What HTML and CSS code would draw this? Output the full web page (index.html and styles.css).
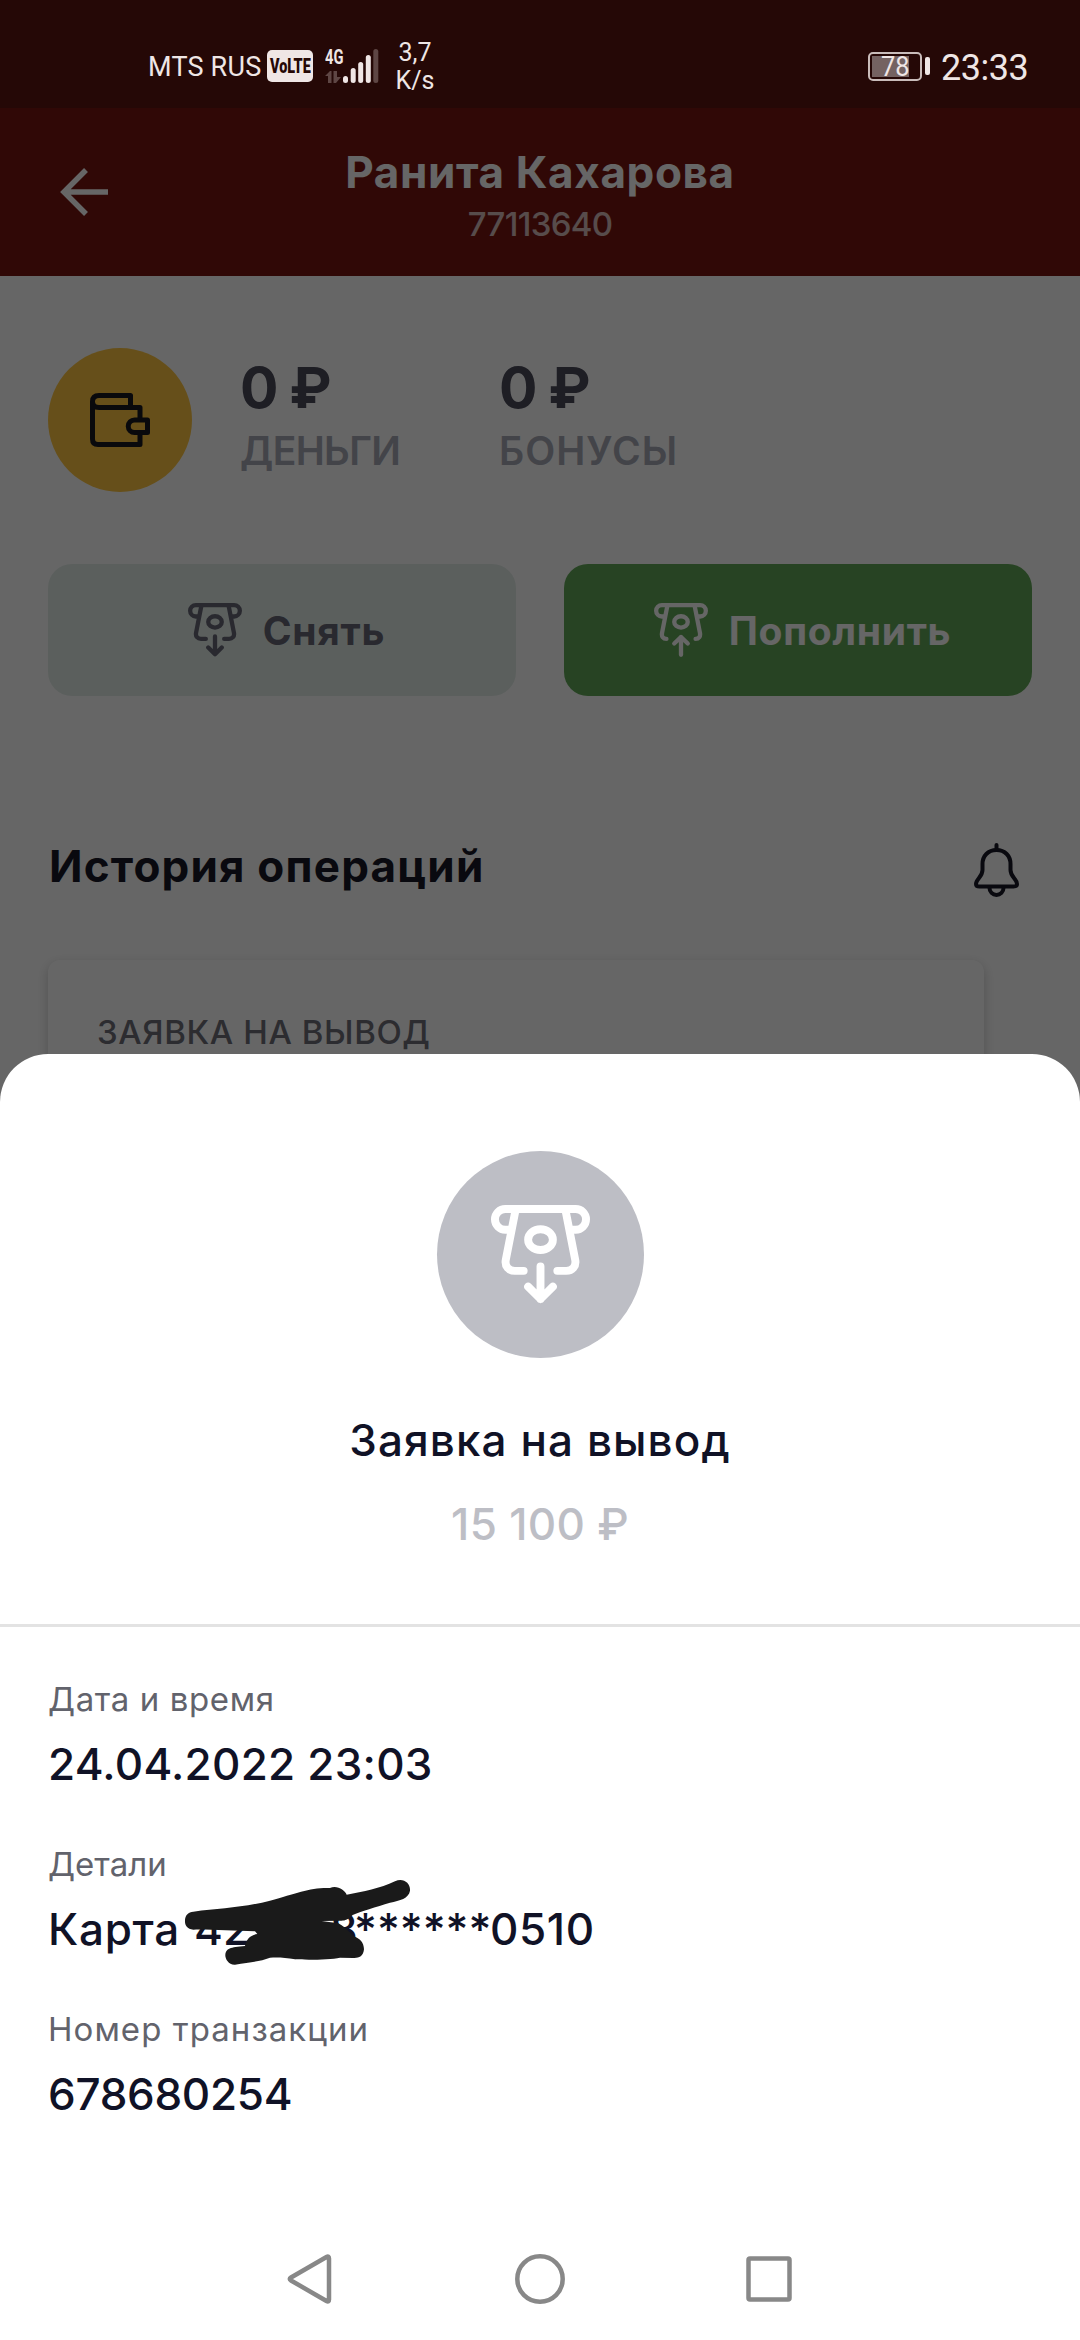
FILE: index.html
```html
<!DOCTYPE html>
<html lang="ru">
<head>
    <meta charset="UTF-8">
    <meta name="viewport" content="width=device-width, initial-scale=1.0">
    <title>История операций</title>
    <link rel="stylesheet" href="styles.css">
</head>
<body>

<div class="screen">
    <!-- Status bar -->
    <div class="status-bar">
        <div class="status-left">
            <span class="carrier">MTS RUS</span>
            <span class="volte"><span>VoLTE</span></span>
            <div class="network">
                <div class="network-type">
                    <span>4G</span>
                    <svg width="16" height="12" viewBox="0 0 16 12">
                        <path d="M0 5 L5 0 H6.500 V12 H3 V5 Z M8.500 0 H12 V6 H16 L11 12 H8.500 Z" fill="#5e4644"/>
                    </svg>
                </div>
                <svg class="signal" width="36" height="34" viewBox="0 0 36 34">
                    <rect x="0" y="27" width="5" height="7" rx="2.500"/>
                    <rect x="7.700" y="19" width="5" height="15" rx="2.500"/>
                    <rect x="15.200" y="13" width="5" height="21" rx="2.500"/>
                    <rect x="22.800" y="6" width="5" height="28" rx="2.500"/>
                    <rect class="off" x="30.300" y="0" width="5" height="34" rx="2.500"/>
                </svg>
            </div>
            <div class="speed">3,7<br>K/s</div>
        </div>
        <div class="status-right">
            <div class="battery"><span>78</span></div>
            <div class="battery-tip"></div>
            <span class="clock">23:33</span>
        </div>
    </div>

    <!-- Header -->
    <header class="header">
        <svg width="48" height="48" viewBox="0 0 48 48" fill="none" stroke="#fff" stroke-width="5.500">
            <path d="M48 24 H5 M26 2 L4 24 L26 46"/>
        </svg>
        <div class="header-text">
            <h1>Ранита Кахарова</h1>
            <p>77113640</p>
        </div>
    </header>

    <main class="content">
        <div class="balance">
            <div class="wallet">
                <svg width="60" height="54" viewBox="0 0 60 54" fill="none" stroke="#18181f" stroke-width="5" stroke-linejoin="round">
                    <path d="M40.500 14.500 V2.500 H9 Q2.500 2.500 2.500 8.500 Q2.500 14.500 9 14.500 H50 V26"/>
                    <path d="M2.500 8.500 V46 Q2.500 51.500 8 51.500 H50 V40"/>
                    <path d="M57.500 27 V39.500 H44.500 a6.250 6.250 0 0 1 0 -12.500 Z"/>
                </svg>
            </div>
            <div class="balance-item">
                <strong>0 ₽</strong>
                <span class="money">ДЕНЬГИ</span>
            </div>
            <div class="balance-item">
                <strong>0 ₽</strong>
                <span class="bonus">БОНУСЫ</span>
            </div>
        </div>

        <div class="actions">
            <button class="btn btn-withdraw">
                <svg class="btn-icon" viewBox="0 0 100 100">
                    <path d="M18 25 H14.500 A10.500 10.500 0 0 1 14.500 4 H85.500 A10.500 10.500 0 0 1 85.500 25 H82"/>
                    <path d="M25 4 L15 55 C13.500 62 18 66.500 24 66.500 H33 M75 4 L85 55 C86.500 62 82 66.500 76 66.500 H67"/>
                    <ellipse cx="50" cy="35" rx="12.500" ry="10.500"/>
                    <path d="M50 62 V95 M37.500 82.500 L50 95 L62.500 82.500"/>
                </svg>
                <span>Снять</span>
            </button>
            <button class="btn btn-deposit">
                <svg class="btn-icon" viewBox="0 0 100 100">
                    <path d="M18 25 H14.500 A10.500 10.500 0 0 1 14.500 4 H85.500 A10.500 10.500 0 0 1 85.500 25 H82"/>
                    <path d="M25 4 L15 55 C13.500 62 17 66.500 23 66.500 M75 4 L85 55 C86.500 62 83 66.500 77 66.500"/>
                    <ellipse cx="50" cy="35" rx="12.500" ry="10.500"/>
                    <path d="M50 96 V63 M37.500 75 L50 63 L62.500 75"/>
                </svg>
                <span>Пополнить</span>
            </button>
        </div>

        <div class="section-head">
            <h2>История операций</h2>
            <svg width="46" height="54" viewBox="0 0 46 54" fill="none" stroke="#181826" stroke-width="4" stroke-linecap="round">
                <path d="M22.500 2 V6"/>
                <path d="M22.500 7 C14 7 8.500 13 8.500 21 V27 C8.500 34 2 36 2 41 Q2 43.500 5.500 43.500 H39.500 Q43 43.500 43 41 C43 36 36.500 34 36.500 27 V21 C36.500 13 31 7 22.500 7 Z"/>
                <path d="M15.500 45 a7 7 0 0 0 14 0"/>
            </svg>
        </div>

        <div class="card">ЗАЯВКА НА ВЫВОД</div>
    </main>

    <div class="backdrop"></div>

    <!-- Bottom sheet -->
    <section class="sheet">
        <div class="summary">
            <div class="summary-icon">
                <svg viewBox="0 0 100 100">
                    <path d="M18 25 H14.500 A10.500 10.500 0 0 1 14.500 4 H85.500 A10.500 10.500 0 0 1 85.500 25 H82"/>
                    <path d="M25 4 L15 55 C13.500 62 18 66.500 24 66.500 H33 M75 4 L85 55 C86.500 62 82 66.500 76 66.500 H67"/>
                    <ellipse cx="50" cy="35" rx="12.500" ry="10.500"/>
                    <path d="M50 62 V95 M37.500 82.500 L50 95 L62.500 82.500"/>
                </svg>
            </div>
            <h3>Заявка на вывод</h3>
            <p class="amount">15 100 ₽</p>
        </div>

        <dl class="details">
            <dt class="l-date">Дата и время</dt>
            <dd class="v-date">24.04.2022 23:03</dd>
            <dt class="l-details">Детали</dt>
            <dd class="card-number">
                <span class="card-word">Карта</span>
                <span class="card-start">42</span>
                <span class="card-eight">8</span>
                <span class="stars">******</span>
                <span class="card-end">0510</span>
                <svg class="scribble" width="260" height="120" viewBox="0 0 780 360">
                    <path d="M70 155 C150 145 220 143 300 122 C380 100 420 82 480 84 C500 74 525 90 530 104 C580 96 630 85 675 64 C700 52 722 70 720 92 C716 115 690 122 660 128 C620 140 570 155 548 165 C535 178 525 182 515 182 L455 183 L505 190 C530 205 540 218 550 228 C570 235 582 248 582 268 C580 290 565 295 550 294 L510 293 C480 300 400 300 375 298 C345 292 320 292 300 293 C270 305 240 306 195 314 C175 315 165 295 166 285 C168 265 180 262 225 258 C228 240 240 225 262 222 L255 214 C190 212 120 208 70 209 C50 207 44 195 45 180 C46 165 55 156 70 155 Z" fill="#1a1a1a"/>
                </svg>
            </dd>
            <dt class="l-number">Номер транзакции</dt>
            <dd class="v-number">678680254</dd>
        </dl>

        <nav class="nav">
            <svg width="50" height="50" viewBox="0 0 50 50">
                <path d="M40.500 3 Q43 1.500 43 4.500 V45.500 Q43 48.500 40.500 47 L5 26.500 Q2.500 25 5 23.500 Z"/>
            </svg>
            <svg width="50" height="50" viewBox="0 0 50 50">
                <circle cx="25" cy="25" r="22.700"/>
            </svg>
            <svg width="50" height="50" viewBox="0 0 50 50">
                <rect x="4.500" y="4.500" width="41" height="41" rx="1.500"/>
            </svg>
        </nav>
    </section>
</div>

</body>
</html>
```

FILE: styles.css
```css
* {
    box-sizing: border-box;
}
body {
    margin: 0;
    font-family: Inter, "Noto Sans", sans-serif;
}
h1, h2, h3, p, dl, dd {
    margin: 0;
}
svg {
    display: block;
    flex-shrink: 0;
}
.screen {
    position: relative;
    width: 1080px;
    height: 2340px;
    overflow: hidden;
    background-color: #fff;
}

/* status bar */
.status-bar {
    position: relative;
    z-index: 2;
    display: flex;
    justify-content: space-between;
    height: 108px;
    padding: 0 48px 0 148px;
    background-color: #250806;
    color: #efe6e5;
    font-family: Roboto, sans-serif;
}
.status-left, .status-right {
    display: flex;
    align-items: center;
    height: 132px;
}
.carrier {
    width: 119px;
    padding-top: 1px;
    font-size: 27px;
    letter-spacing: 0.2px;
    white-space: nowrap;
}
.volte {
    display: flex;
    align-items: center;
    justify-content: center;
    width: 46px;
    height: 32px;
    border-radius: 5px;
    background-color: #efe6e5;
    color: #250806;
    font-size: 20px;
    font-weight: 900;
}
.volte span {
    transform: scaleX(0.72);
}
.network {
    display: flex;
    margin-left: 12px;
}
.network-type {
    display: flex;
    flex-direction: column;
    justify-content: space-between;
    width: 18px;
    height: 34px;
    font-size: 21px;
    font-weight: 700;
    line-height: 16px;
}
.network-type span {
    width: 26px;
    transform: scaleX(0.7);
    transform-origin: left;
}
.signal {
    fill: #efe6e5;
}
.signal .off {
    fill: #5e4644;
}
.speed {
    width: 46px;
    margin-left: 13px;
    padding-top: 2px;
    font-size: 25px;
    line-height: 28px;
    text-align: center;
}
.battery {
    display: flex;
    align-items: center;
    justify-content: center;
    width: 54px;
    height: 29px;
    border: 2px solid #c9bcba;
    border-radius: 5px;
    background: linear-gradient(#746261, #746261) 2px 2px / 37px 21px no-repeat;
    font-size: 27px;
    line-height: 29px;
}
.battery span {
    padding-top: 2px;
    transform: scaleX(0.94);
}
.battery-tip {
    width: 5px;
    height: 18px;
    margin-left: 3px;
    border-radius: 2px;
    background-color: #efe6e5;
}
.clock {
    width: 91px;
    margin-left: 11px;
    padding-top: 3px;
    font-size: 36px;
    letter-spacing: -0.5px;
}

/* header */
.header {
    display: grid;
    grid-template-columns: 48px 1fr 48px;
    align-items: center;
    height: 168px;
    padding: 0 60px;
    background-color: #781410;
    color: #fff;
    text-align: center;
}
.header-text {
    padding-top: 4px;
}
.header h1 {
    font-size: 44px;
    font-weight: 700;
    letter-spacing: 0.65px;
    line-height: 56px;
}
.header p {
    margin-top: 4px;
    font-size: 33px;
    font-weight: 500;
    letter-spacing: -0.7px;
    line-height: 40px;
    opacity: 0.72;
}

/* content under the sheet */
.content {
    padding: 72px 48px 0;
}
.balance {
    display: flex;
    height: 144px;
}
.wallet {
    display: flex;
    align-items: center;
    justify-content: center;
    width: 144px;
    margin-right: 48px;
    border-radius: 50%;
    background-color: #ffc641;
}
.balance-item {
    display: flex;
    flex-direction: column;
    width: 259px;
    padding-top: 8px;
}
.balance-item strong {
    color: #4b4b5a;
    font-size: 57px;
    letter-spacing: -1.3px;
    line-height: 64px;
}
.balance-item span {
    margin-top: 11px;
    color: #a8aab6;
    font-size: 39px;
    font-weight: 600;
    line-height: 40px;
}
.money {
    letter-spacing: -0.6px;
}
.bonus {
    letter-spacing: 1px;
}
.actions {
    display: grid;
    grid-template-columns: 1fr 1fr;
    gap: 48px;
    margin-top: 72px;
}
.btn {
    display: flex;
    align-items: center;
    justify-content: center;
    gap: 21px;
    height: 132px;
    padding: 0 0 0 9px;
    border: none;
    border-radius: 24px;
    font-family: inherit;
    font-size: 39px;
    font-weight: 700;
    letter-spacing: 0.7px;
}
.btn-withdraw {
    background-color: #e4eee9;
    color: #676776;
}
.btn-deposit {
    background-color: #62a858;
    color: #fff;
}
.btn-icon {
    width: 54px;
    height: 54px;
}
.btn-icon, .summary-icon svg {
    fill: none;
    stroke: currentColor;
    stroke-width: 8;
    stroke-linecap: round;
    stroke-linejoin: round;
}
.section-head {
    display: flex;
    justify-content: space-between;
    height: 56px;
    margin-top: 142px;
    padding: 0 12px 0 1px;
}
.section-head h2 {
    color: #181826;
    font-size: 44px;
    font-weight: 700;
    letter-spacing: 1.2px;
    line-height: 56px;
}
.section-head svg {
    margin-top: 5px;
}
.card {
    width: 936px;
    height: 400px;
    margin-top: 66px;
    padding: 52px 49px;
    border-radius: 12px;
    background-color: #fff;
    box-shadow: 0 4px 12px rgba(0, 0, 0, 0.2);
    color: #6e6e78;
    font-size: 33px;
    font-weight: 500;
    letter-spacing: 0.6px;
    line-height: 40px;
}
.backdrop {
    position: absolute;
    inset: 0;
    background-color: rgba(0, 0, 0, 0.6);
}

/* bottom sheet */
.sheet {
    position: absolute;
    top: 1054px;
    left: 0;
    right: 0;
    bottom: 0;
    display: flex;
    flex-direction: column;
    border-radius: 48px 48px 0 0;
    background-color: #fff;
}
.summary {
    display: flex;
    flex-direction: column;
    align-items: center;
    padding: 97px 0 72px;
    border-bottom: 3px solid #e3e3e3;
}
.summary-icon {
    width: 207px;
    height: 207px;
    padding: 54px;
    border-radius: 50%;
    background-color: #bdbec5;
    color: #fff;
}
.summary h3 {
    margin-top: 54px;
    color: #101226;
    font-size: 44px;
    font-weight: 500;
    letter-spacing: 1.1px;
    line-height: 56px;
}
.amount {
    margin-top: 28px;
    color: #bdbec5;
    font-size: 44px;
    font-weight: 500;
    letter-spacing: 0.3px;
    line-height: 56px;
}
.details {
    padding: 0 48px;
}
.details dt {
    margin-top: 52px;
    color: #62636c;
    font-size: 33px;
    line-height: 40px;
}
.details dd {
    margin-top: 17px;
    color: #101226;
    font-size: 44px;
    font-weight: 500;
    line-height: 56px;
}
.details .l-date {
    letter-spacing: 0.6px;
}
.details .l-number {
    letter-spacing: 1.05px;
}
.details .v-date {
    letter-spacing: 0.25px;
}
.details .v-number {
    letter-spacing: -0.3px;
}
.details .card-number {
    position: relative;
    display: flex;
}
.card-word {
    width: 146px;
    letter-spacing: 0.7px;
}
.card-start {
    width: 136px;
}
.card-eight {
    width: 24px;
}
.stars {
    width: 136px;
}
.card-end {
    letter-spacing: 0.6px;
}
.scribble {
    position: absolute;
    top: -41px;
    left: 122px;
}
.nav {
    display: flex;
    align-items: center;
    justify-content: center;
    gap: 179px;
    height: 122px;
    margin-top: auto;
    fill: none;
    stroke: #888;
    stroke-width: 4.5;
}
```
